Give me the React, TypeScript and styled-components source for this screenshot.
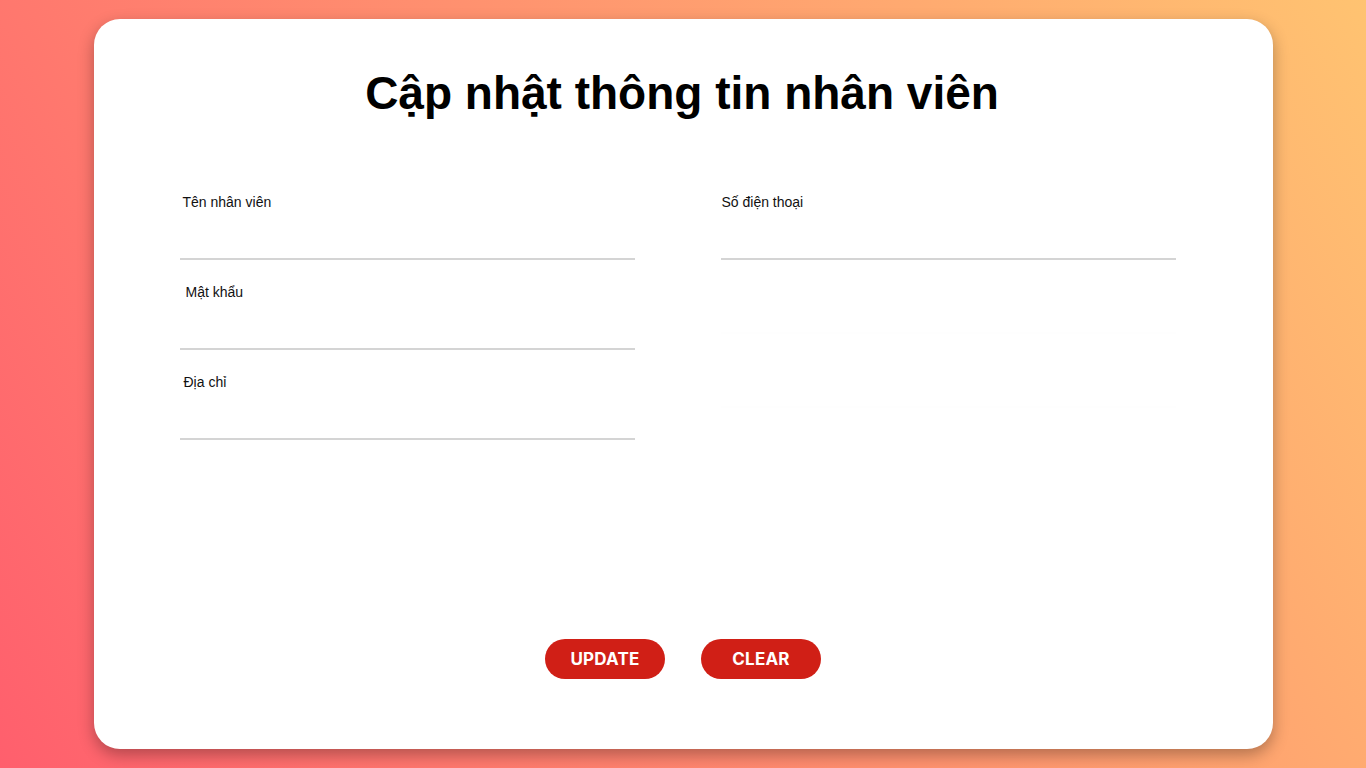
import React from "react";
import styled, { createGlobalStyle } from "styled-components";

const Global = createGlobalStyle`
  * { box-sizing: border-box; }
  html, body { margin: 0; padding: 0; }
  body {
    min-height: 100vh;
    background: linear-gradient(60deg, #ff5f6d, #ffc371);
    font-family: "Liberation Sans", Arial, sans-serif;
  }
`;

const Page = styled.div`
  height: 768px;
  display: flex;
  align-items: center;
  justify-content: center;
`;

const Card = styled.div`
  width: 1179px;
  height: 730px;
  background: #fff;
  border-radius: 26px;
  box-shadow: 0 6px 16px rgba(0, 0, 0, 0.3);
  padding: 46px 91px 70px 86px;
  display: flex;
  flex-direction: column;
`;

const Title = styled.h1`
  margin: 0;
  text-align: center;
  font-family: "Liberation Sans", Arial, sans-serif;
  font-weight: 700;
  font-size: 46px;
  line-height: 56px;
  color: #000;
  padding-left: 3px;
`;

const Grid = styled.div`
  margin-top: 73px;
  display: grid;
  grid-template-columns: 455px 455px;
  column-gap: 86px;
`;

const Column = styled.div`
  display: flex;
  flex-direction: column;
  gap: 24px;
`;

const Field = styled.div<{ $ghost?: boolean }>`
  display: flex;
  flex-direction: column;
  opacity: ${(p) => (p.$ghost ? 0.025 : 1)};
`;

const Label = styled.label<{ $indent?: number }>`
  font-size: 14px;
  line-height: 16px;
  color: #111;
  margin: 0 0 8px ${(p) => p.$indent ?? 3}px;
`;

const Input = styled.input`
  height: 42px;
  border: none;
  border-bottom: 2px solid #d4d4d4;
  background: transparent;
  outline: none;
  font-family: inherit;
  font-size: 14px;
  padding: 0 3px;
`;

const Actions = styled.div`
  margin-top: auto;
  display: flex;
  justify-content: center;
  gap: 36px;
  padding-left: 5px;
`;

const Button = styled.button`
  width: 120px;
  height: 40px;
  border: none;
  border-radius: 20px;
  background: #d01f16;
  color: #fff;
  font-family: Inter, "Open Sans", sans-serif;
  font-weight: 700;
  font-size: 17px;
  letter-spacing: 0.2px;
  text-transform: uppercase;
  cursor: pointer;
`;

export default function App() {
  return (
    <>
      <Global />
      <Page>
        <Card>
          <Title>Cập nhật thông tin nhân viên</Title>
          <Grid>
            <Column>
              <Field>
                <Label>Tên nhân viên</Label>
                <Input type="text" />
              </Field>
              <Field>
                <Label $indent={6}>Mật khẩu</Label>
                <Input type="password" />
              </Field>
              <Field>
                <Label $indent={4}>Địa chỉ</Label>
                <Input type="text" />
              </Field>
            </Column>
            <Column>
              <Field>
                <Label $indent={1}>Số điện thoại</Label>
                <Input type="text" />
              </Field>
              <Field $ghost>
                <Label> </Label>
                <Input type="text" />
              </Field>
              <Field $ghost>
                <Label> </Label>
                <Input type="text" />
              </Field>
            </Column>
          </Grid>
          <Actions>
            <Button>Update</Button>
            <Button>Clear</Button>
          </Actions>
        </Card>
      </Page>
    </>
  );
}
